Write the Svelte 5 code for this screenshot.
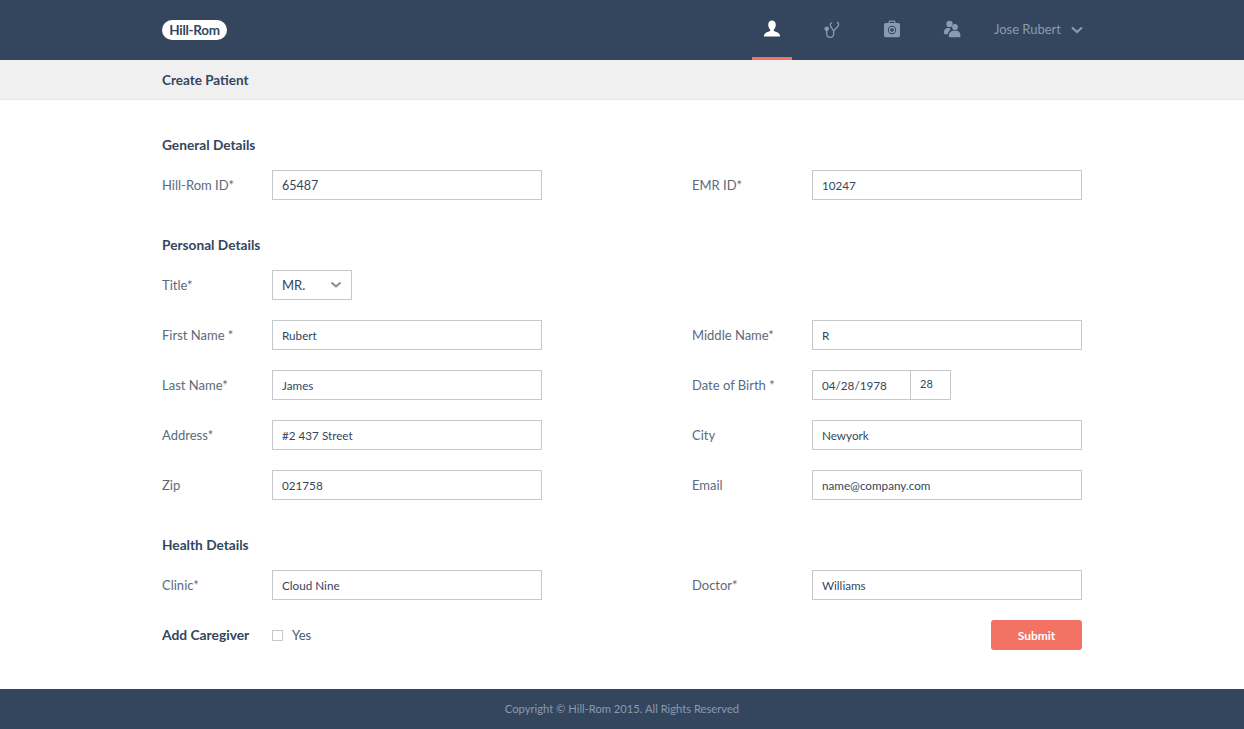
<script>
  const personal = [
    { left: 'First Name *', value: 'Rubert', right: 'Middle Name*', rightValue: 'R' },
    { left: 'Last Name*', value: 'James', right: 'Date of Birth *', rightValue: '04/28/1978', age: '28' },
    { left: 'Address*', value: '#2 437 Street', right: 'City', rightValue: 'Newyork' },
    { left: 'Zip', value: '021758', right: 'Email', rightValue: 'name@company.com' }
  ];
</script>

<div class="page">
  <header class="topbar">
    <div class="wrap topbar-inner">
      <div class="logo">Hill-Rom</div>
      <nav class="nav">
        <a class="nav-item active" href="#patient" aria-label="Patients">
          <svg width="18" height="18" viewBox="0 0 18 18">
            <path fill="currentColor" d="M9 .5c2.300 0 3.800 1.800 3.800 4.200 0 1.800-.8 3.500-1.800 4.500-.4.4-.4 1.400.2 1.800 1.500.9 4.600 1.600 5.400 3.200.3.600.4 1.500.4 2.300H1c0-.8.1-1.700.4-2.300.8-1.600 3.900-2.300 5.400-3.200.6-.4.6-1.400.2-1.800-1-1-1.800-2.700-1.800-4.500C5.200 2.300 6.700.5 9 .5z"/>
          </svg>
        </a>
        <a class="nav-item" href="#doctor" aria-label="Doctors">
          <svg width="18" height="18" viewBox="0 0 18 18" fill="none" stroke="currentColor" stroke-width="1.300" stroke-linecap="round">
            <path d="M8.500 2.800C7.300 3.300 7 4.800 7.700 6.400l2.900 4.600"/>
            <path d="M14.300 2.400c1.200.6 1.500 2.200.8 3.700l-4.500 4.900"/>
            <path d="M10.600 11v3.500c0 3.800-6.900 3.800-6.900-.5V10"/>
            <circle cx="3.700" cy="8.800" r="2.300" fill="currentColor" stroke="none"/>
          </svg>
        </a>
        <a class="nav-item" href="#kit" aria-label="Clinics">
          <svg width="18" height="18" viewBox="0 0 18 18">
            <path fill="currentColor" fill-rule="evenodd" d="M5.500 3V2c0-.8.7-1.500 1.500-1.500h4c.8 0 1.500.7 1.500 1.500v1h2.800c.9 0 1.700.8 1.700 1.700v10.800c0 .9-.8 1.700-1.700 1.700H2.700c-.9 0-1.700-.8-1.700-1.700V4.700C1 3.800 1.800 3 2.700 3h2.800zm1.200 0h4.600V2c0-.2-.1-.3-.3-.3H7c-.2 0-.3.1-.3.3v1zM9 5.800a4.200 4.200 0 1 0 0 8.400 4.200 4.200 0 0 0 0-8.400zm0 1a3.200 3.200 0 1 1 0 6.400 3.200 3.200 0 0 1 0-6.400zM8.300 8v1.300H7v1.400h1.300V12h1.400v-1.300H11V9.300H9.700V8H8.300z"/>
          </svg>
        </a>
        <a class="nav-item" href="#groups" aria-label="Caregivers">
          <svg width="18" height="18" viewBox="0 0 18 18">
            <circle cx="6.500" cy="3.900" r="3.200" fill="currentColor"/>
            <path fill="currentColor" d="M.8 12.500c0-2.500 1.800-4.600 4.200-4.600h2.500c-.5.700-.7 1.400-.5 2.300-1.300.9-2 2.200-2.100 4H2.200C1.300 14.200.8 13.400.8 12.500z"/>
            <circle cx="12" cy="7" r="2.900" fill="currentColor"/>
            <path fill="currentColor" d="M5.800 16c0-3 2.200-5.300 4.500-5.300h3.400c2.300 0 3.800 2.300 3.800 5.300 0 .8-.5 1.300-1.200 1.300H7c-.7 0-1.200-.5-1.200-1.300z"/>
          </svg>
        </a>
      </nav>
      <div class="user">
        <span>Jose Rubert</span>
        <svg width="12" height="8" viewBox="0 0 12 8" fill="none" stroke="currentColor" stroke-width="2.200"><path d="M1 1.500l5 4.500 5-4.500"/></svg>
      </div>
    </div>
  </header>

  <div class="subbar">
    <div class="wrap"><h1>Create Patient</h1></div>
  </div>

  <main class="wrap main">
    <section>
      <h2>General Details</h2>
      <div class="grid">
        <div class="field"><label for="hr">Hill-Rom ID*</label><input id="hr" class="big" value="65487" /></div>
        <div class="field"><label for="emr">EMR ID*</label><input id="emr" value="10247" /></div>
      </div>
    </section>

    <section>
      <h2>Personal Details</h2>
      <div class="grid">
        <div class="field">
          <span class="label">Title*</span>
          <div class="select">
            <span>MR.</span>
            <svg width="12" height="8" viewBox="0 0 12 8" fill="none" stroke="currentColor" stroke-width="2"><path d="M1.500 1.500l4.500 4 4.500-4"/></svg>
          </div>
        </div>
        <div></div>
        {#each personal as row}
          <div class="field"><span class="label">{row.left}</span><input value={row.value} /></div>
          <div class="field">
            <span class="label">{row.right}</span>
            {#if row.age}
              <div class="dob">
                <input value={row.rightValue} />
                <input class="age" value={row.age} />
              </div>
            {:else}
              <input value={row.rightValue} />
            {/if}
          </div>
        {/each}
      </div>
    </section>

    <section>
      <h2>Health Details</h2>
      <div class="grid">
        <div class="field"><span class="label">Clinic*</span><input value="Cloud Nine" /></div>
        <div class="field"><span class="label">Doctor*</span><input value="Williams" /></div>
        <div class="field">
          <span class="label strong">Add Caregiver</span>
          <span class="check"><i></i>Yes</span>
        </div>
        <div class="actions"><button type="button">Submit</button></div>
      </div>
    </section>
  </main>

  <footer class="footer">Copyright © Hill-Rom 2015. All Rights Reserved</footer>
</div>

<style>
  :global(body) {
    margin: 0;
    background: #fff;
    font-family: Lato, "Open Sans", sans-serif;
    color: #34465d;
  }

  .page {
    display: flex;
    flex-direction: column;
    min-height: 729px;
  }

  .wrap {
    width: 920px;
    margin-left: 162px;
  }

  .topbar {
    height: 60px;
    background: #34465d;
  }

  .topbar-inner {
    display: flex;
    align-items: center;
    height: 100%;
  }

  .logo {
    width: 65px;
    height: 20px;
    border-radius: 10px;
    background: #fff;
    color: #34465d;
    font-size: 13.5px;
    font-weight: 700;
    line-height: 20px;
    text-align: center;
    letter-spacing: -0.3px;
  }

  .nav {
    display: flex;
    gap: 20px;
    margin-left: auto;
    height: 100%;
  }

  .nav-item {
    box-sizing: border-box;
    display: flex;
    align-items: center;
    justify-content: center;
    width: 40px;
    height: 60px;
    padding-top: 1px;
    color: #8a9ab0;
    border-bottom: 3px solid transparent;
  }

  .nav-item.active {
    color: #fff;
    border-bottom-color: #f27264;
  }

  .user {
    display: flex;
    align-items: center;
    gap: 10px;
    margin-left: 22px;
    margin-right: -1px;
    color: #8a9ab0;
    font-size: 13px;
  }

  .user span {
    padding-bottom: 2px;
  }

  .subbar {
    box-sizing: border-box;
    height: 40px;
    background: #f0f0f0;
    border-bottom: 1px solid #e4e4e6;
  }

  h1 {
    margin: 0;
    font-size: 13.5px;
    font-weight: 700;
    line-height: 40px;
  }

  .main {
    flex: 1;
    padding-top: 30px;
  }

  section + section {
    margin-top: 30px;
  }

  h2 {
    margin: 0 0 10px;
    font-size: 13.700px;
    font-weight: 700;
    line-height: 30px;
  }

  .grid {
    display: grid;
    grid-template-columns: 380px 390px;
    column-gap: 150px;
    row-gap: 20px;
  }

  .field {
    display: flex;
    align-items: center;
    height: 30px;
  }

  label,
  .label {
    flex: none;
    width: 110px;
    color: #5b6a7e;
    font-size: 13px;
    line-height: 30px;
  }

  .grid > .field:nth-child(even) > label,
  .grid > .field:nth-child(even) > .label {
    width: 120px;
  }

  .label.strong {
    color: #34465d;
    font-size: 13.800px;
    font-weight: 700;
  }

  input {
    box-sizing: border-box;
    width: 270px;
    height: 30px;
    padding: 0 9px;
    border: 1px solid #c6c8cc;
    border-radius: 0;
    outline: none;
    background: #fff;
    color: #34465d;
    font-family: inherit;
    font-size: 11.700px;
  }

  input.big {
    font-size: 12.500px;
  }

  .select {
    box-sizing: border-box;
    display: flex;
    align-items: center;
    justify-content: space-between;
    width: 80px;
    height: 30px;
    padding: 0 9px;
    border: 1px solid #c6c8cc;
    font-size: 13px;
  }

  .select svg {
    color: #7f8ea3;
  }

  .dob {
    display: flex;
  }

  .dob input {
    width: 99px;
  }

  .dob input.age {
    width: 41px;
    margin-left: -1px;
    padding-bottom: 3px;
    font-size: 11px;
  }

  .check {
    display: flex;
    align-items: center;
    gap: 9px;
    color: #4a5a70;
    font-size: 13px;
  }

  .check i {
    box-sizing: border-box;
    width: 11px;
    height: 11px;
    border: 1px solid #c6c8cc;
  }

  .actions {
    display: flex;
    justify-content: flex-end;
  }

  button {
    width: 91px;
    height: 30px;
    border: 0;
    border-radius: 3px;
    background: #f27264;
    color: #fff;
    font-family: inherit;
    font-size: 12px;
    font-weight: 700;
  }

  .footer {
    height: 40px;
    background: #34465d;
    color: #8a9ab0;
    font-size: 11.200px;
    line-height: 40px;
    text-align: center;
  }
</style>
